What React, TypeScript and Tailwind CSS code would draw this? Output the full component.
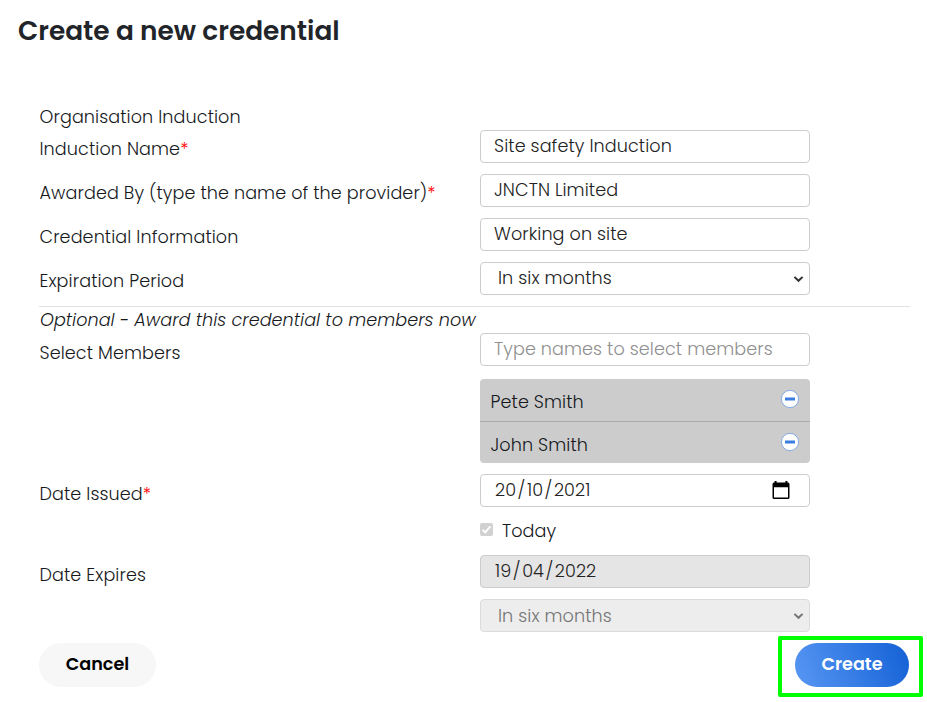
import type { ReactNode } from "react";

type RowProps = {
  label: string;
  required?: boolean;
  className?: string;
  labelClass?: string;
  children: ReactNode;
};

function Row({ label, required, className = "", labelClass = "pt-[6px]", children }: RowProps) {
  return (
    <div className={`grid grid-cols-[441px_330px] ${className}`}>
      <div className={`whitespace-nowrap pl-[0.5px] leading-[26px] ${labelClass}`}>
        {label}
        {required && <span className="text-[#ff0000]">*</span>}
      </div>
      <div>{children}</div>
    </div>
  );
}

function Field({ className = "border-[#ccc] bg-white text-[#222]", children }: { className?: string; children: ReactNode }) {
  return (
    <div className={`flex h-[33px] items-center whitespace-nowrap rounded-[4px] border pl-[13px] ${className}`}>
      {children}
    </div>
  );
}

function Chevron({ className }: { className: string }) {
  return (
    <svg className={`ml-auto mr-[5px] ${className}`} width="11" height="8" viewBox="0 0 11 8" fill="none">
      <path d="M1.4 1.9 5.5 5.8 9.6 1.9" stroke="currentColor" strokeWidth="2" />
    </svg>
  );
}

function DateText({ parts }: { parts: string[] }) {
  return (
    <span className="flex">
      <span className="pl-px pr-[1.5px]">{parts[0]}</span>/<span className="px-[1.5px]">{parts[1]}</span>/
      <span className="pl-[1.5px]">{parts[2]}</span>
    </span>
  );
}

function CalendarIcon() {
  return (
    <svg className="-mt-[1px] ml-auto mr-[19px]" width="18" height="20" viewBox="0 0 18 20" fill="#000">
      <path
        fillRule="evenodd"
        d="M2.6 1h2v1.6h8.8V1h2v1.6h.6a1.5 1.5 0 0 1 1.5 1.5v13.4a1.5 1.5 0 0 1-1.5 1.5H2a1.5 1.5 0 0 1-1.5-1.5V4.1A1.5 1.5 0 0 1 2 2.6h.6zM2 7.2v10.4h14V7.2z"
      />
    </svg>
  );
}

function Member({ name, className }: { name: string; className: string }) {
  return (
    <div className={`flex justify-between pl-[10.5px] pr-[11px] ${className}`}>
      <span className="pt-[10px] leading-[26px]">{name}</span>
      <svg className="mt-[11px]" width="18" height="18" viewBox="0 0 18 18">
        <circle cx="9" cy="9" r="8.6" fill="#fff" stroke="#6f9fe8" strokeWidth=".8" />
        <rect x="4" y="7.5" width="10" height="3" fill="#3b7de0" />
      </svg>
    </div>
  );
}

export default function App() {
  return (
    <div className="h-[702px] w-[927px] overflow-hidden bg-white text-[17.6px] font-light tracking-[0.09px] text-[#16191c] [font-family:Poppins,Inter,sans-serif]">
      <h1 className="pl-[18px] pt-[13px] text-[26.4px] font-semibold leading-[36px] tracking-normal text-[#212529]">
        Create a new credential
      </h1>
      <main className="ml-[39px] w-[871px] pt-[55px]">
        <div className="pl-[0.5px] leading-[26px]">Organisation Induction</div>
        <Row label="Induction Name" required>
          <Field>Site safety Induction</Field>
        </Row>
        <Row className="mt-[11px]" label="Awarded By (type the name of the provider)" required>
          <Field>JNCTN Limited</Field>
        </Row>
        <Row className="mt-[11px]" label="Credential Information">
          <Field>Working on site</Field>
        </Row>
        <Row className="mt-[11px]" label="Expiration Period">
          <Field>
            <span className="pl-1">In six months</span>
            <Chevron className="text-[#333]" />
          </Field>
        </Row>
        <div className="mt-[11px] h-[27px] whitespace-nowrap border-t border-[#e2e2e2] pl-px italic leading-[26px] tracking-[0.04px]">
          Optional - Award this credential to members now
        </div>
        <Row label="Select Members" labelClass="pt-[7px]">
          <Field className="border-[#ccc] bg-white text-[#8f8f8f]">Type names to select members</Field>
          <div className="mt-[13px] h-[84px] rounded-[4px] bg-[#ccc]">
            <Member name="Pete Smith" className="h-[43px] border-b border-[#aaa]" />
            <Member name="John Smith" className="h-[41px]" />
          </div>
        </Row>
        <Row className="mt-[11px]" label="Date Issued" labelClass="pt-[7px]" required>
          <Field>
            <DateText parts={["20", "10", "2021"]} />
            <CalendarIcon />
          </Field>
          <div className="mb-px mt-[10px] flex h-[26px] items-center">
            <svg className="-mt-[1px] mr-[9px]" width="13" height="13" viewBox="0 0 13 13" fill="none">
              <rect width="13" height="13" rx="2" fill="#d1d1d1" />
              <path d="M2.6 6.9 5.2 9.4 10.4 3.4" stroke="#fff" strokeWidth="2" />
            </svg>
            <span className="pt-[3px]">Today</span>
          </div>
        </Row>
        <Row className="mt-[11px]" label="Date Expires" labelClass="pt-[7px]">
          <Field className="border-[#ccc] bg-[#e5e5e5] text-[#222]">
            <DateText parts={["19", "04", "2022"]} />
          </Field>
          <div className="mt-[11px]">
            <Field className="border-[#dbdbdb] bg-[#ededed] text-[#757575]">
              <span className="pl-1 pt-[2px]">In six months</span>
              <Chevron className="text-[#757575]" />
            </Field>
          </div>
        </Row>
      </main>
      <footer className="mt-[4px] flex justify-between pl-[39px] pr-[4px] tracking-normal">
        <button className="mt-[7px] h-[44px] w-[117px] rounded-full bg-[#f7f7f7] pb-[2px] font-semibold text-black">Cancel</button>
        <div className="flex h-[61px] w-[145px] justify-center rounded-[2px] border-4 border-[#00ff00] pt-[3px]">
          <button className="ml-[3px] h-[44px] w-[114px] rounded-full bg-[linear-gradient(70deg,#5897f3,#1361d6)] pb-[2px] font-semibold text-white">
            Create
          </button>
        </div>
      </footer>
    </div>
  );
}
